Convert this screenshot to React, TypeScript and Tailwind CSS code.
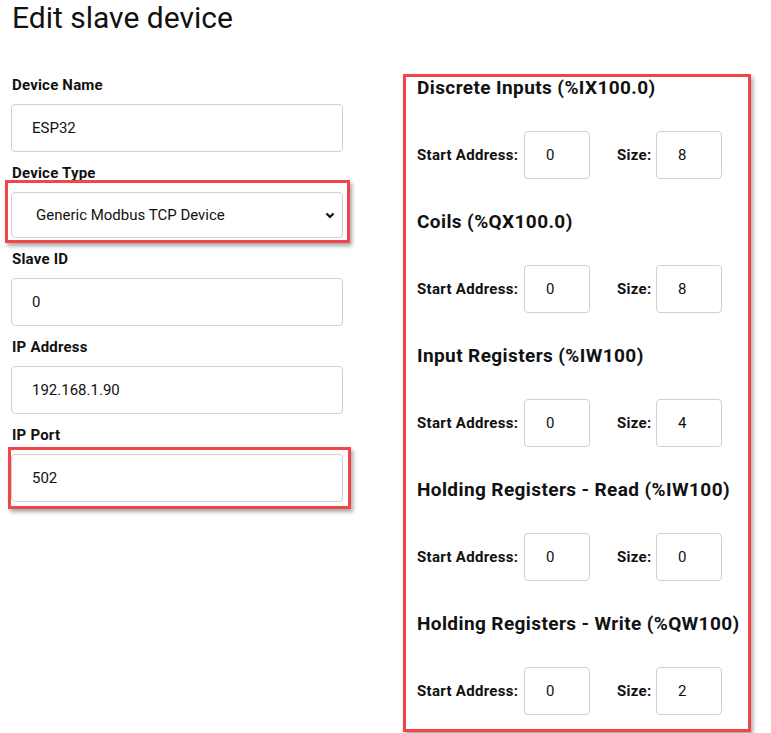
import React from "react";

const leftFields = [
  { label: "Device Name", value: "ESP32" },
  { label: "Device Type", value: "Generic Modbus TCP Device", select: true, mark: "select" },
  { label: "Slave ID", value: "0" },
  { label: "IP Address", value: "192.168.1.90" },
  { label: "IP Port", value: "502", mark: "port" },
];

const sections = [
  { title: "Discrete Inputs (%IX100.0)", start: "0", size: "8" },
  { title: "Coils (%QX100.0)", start: "0", size: "8" },
  { title: "Input Registers (%IW100)", start: "0", size: "4" },
  { title: "Holding Registers - Read (%IW100)", start: "0", size: "0" },
  { title: "Holding Registers - Write (%QW100)", start: "0", size: "2" },
];

function SmallInput({ value }: { value: string }) {
  return (
    <input
      readOnly
      value={value}
      className="w-[66px] h-[48px] rounded-[4px] border border-[#d0d0d0] bg-white pl-[21px] text-[15px] text-[#111] outline-none"
    />
  );
}

export default function App() {
  return (
    <div
      className="w-[771px] h-[733px] bg-white text-[#111] overflow-hidden"
      style={{ fontFamily: "Roboto, 'Liberation Sans', sans-serif" }}
    >
      {/* Title */}
      <h1 className="pl-[12px] text-[30px] leading-[36px] font-normal text-[#111]">
        Edit slave device
      </h1>

      <div className="mt-[40px] flex items-start">
        {/* Left column */}
        <div className="ml-[11px] w-[332px] flex flex-col gap-[12px]">
          {leftFields.map((f) => (
            <div key={f.label} className="flex flex-col">
              <label className="pl-[1px] h-[18px] leading-[18px] text-[15px] tracking-[0.2px] font-bold mb-[10px]">
                {f.label}
              </label>
              <div className="relative">
                {f.select ? (
                  <div className="h-[46px] rounded-[4px] border border-[#d0d0d0] bg-white flex items-center justify-between pl-[24px] pr-[7px] text-[15px]">
                    <span>{f.value}</span>
                    <svg width="10" height="7" viewBox="0 0 10 7">
                      <path d="M1.5 1.5 L5 5 L8.5 1.5" fill="none" stroke="#111" strokeWidth="2.2" />
                    </svg>
                  </div>
                ) : (
                  <input
                    readOnly
                    value={f.value}
                    className="block w-full h-[48px] rounded-[4px] border border-[#d0d0d0] bg-white pl-[20px] text-[15px] text-[#111] outline-none"
                  />
                )}
                {f.mark === "select" && (
                  <div className="absolute left-[-6px] right-[-7px] top-[-12px] bottom-[-5px] border-[3px] border-[#f0464a] shadow-[2px_3px_4px_rgba(0,0,0,0.35)] pointer-events-none" />
                )}
                {f.mark === "port" && (
                  <div className="absolute left-[-3px] right-[-8px] top-[-7px] bottom-[-7px] border-[3px] border-[#f0464a] shadow-[2px_3px_4px_rgba(0,0,0,0.35)] pointer-events-none" />
                )}
              </div>
            </div>
          ))}
        </div>

        {/* Right column */}
        <div className="relative ml-[74px] mt-[1px] w-[328px] flex flex-col gap-[32px]">
          {sections.map((s) => (
            <div key={s.title} className="flex flex-col">
              <h3 className="text-[19px] leading-[22px] tracking-[0.4px] font-bold whitespace-nowrap">
                {s.title}
              </h3>
              <div className="mt-[32px] h-[48px] flex items-center">
                <span className="w-[107px] text-[15px] tracking-[0.3px] font-bold">Start Address:</span>
                <SmallInput value={s.start} />
                <span className="ml-[27px] w-[39px] text-[15px] tracking-[0.3px] font-bold">Size:</span>
                <SmallInput value={s.size} />
              </div>
            </div>
          ))}
          <div className="absolute left-[-14px] right-[-6px] top-[-3px] bottom-[-17px] border-[3px] border-[#f0464a] shadow-[2px_3px_4px_rgba(0,0,0,0.35)] pointer-events-none" />
        </div>
      </div>
    </div>
  );
}
